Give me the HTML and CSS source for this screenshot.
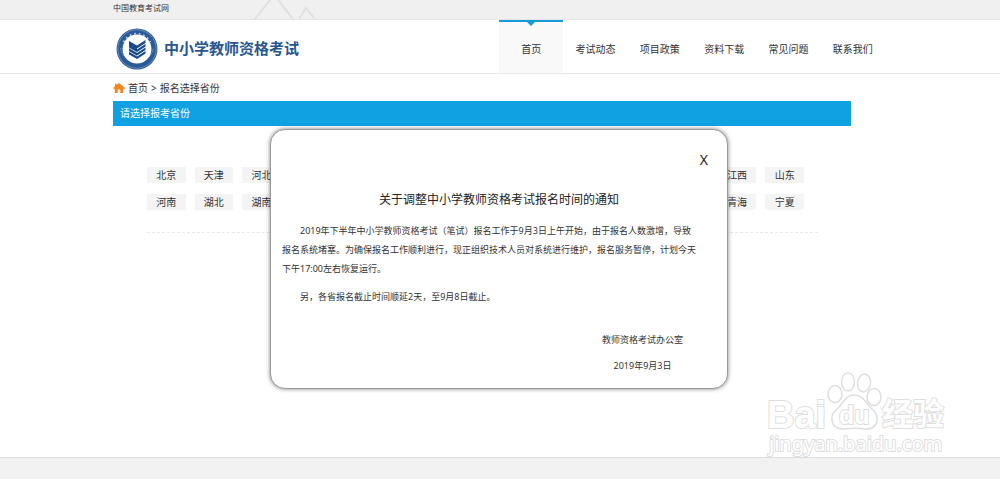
FILE: index.html
```html
<!DOCTYPE html>
<html lang="zh-CN">
<head>
<meta charset="utf-8">
<meta name="viewport" content="width=device-width, initial-scale=1">
<title>中小学教师资格考试</title>
<link rel="stylesheet" href="styles.css">
</head>
<body class="page">
<div class="topbar">
  <div class="wrap topbar-inner">
    <a class="topbar-link" href="#">中国教育考试网</a>
    <svg class="peaks" viewBox="0 0 68 19" aria-hidden="true"><path d="M2 19 17 0M25 0 40 19M46 19 53 8 62 19" fill="none" stroke="#e0e0e0" stroke-width="2"/></svg>
  </div>
</div>
<header class="header">
  <div class="wrap header-inner">
    <a class="brand" href="#">
      <svg class="brand-mark" viewBox="0 0 42 42" aria-hidden="true">
        <circle cx="21" cy="21" r="20.5" fill="#2b5a96"/>
        <circle cx="21" cy="21" r="19.2" fill="none" stroke="#8faccd" stroke-width="0.6"/>
        <path d="M7.500 14A15.500 16.500 0 0 1 34.500 14" fill="none" stroke="#c6d5e6" stroke-width="1.600" stroke-dasharray="1.600 3"/>
        <path d="M4.500 20A16.800 16.800 0 0 0 37.500 20" fill="none" stroke="#7f9fc5" stroke-width="1.200" stroke-dasharray="1 1"/>
        <circle cx="21" cy="21" r="14.400" fill="#fff"/>
        <path d="M13 13 21 17.500V31L13 26.500Z" fill="#174b8b"/>
        <path d="M21 17.500 29.500 12V15L21 20.500ZM21 21.500 29.500 16V18.500L21 24ZM21 25 29.500 19.500V22L21 27.500ZM21 28.500 29.500 23V25.500L21 31Z" fill="#174b8b"/>
        <path d="M13 20 21 24.500M13 23.500 21 28" stroke="#fff" stroke-width="0.700"/>
      </svg>
      <span class="brand-name">中小学教师资格考试</span>
    </a>
    <nav class="nav">
      <a class="nav-item nav-active" href="#">首页</a>
      <a class="nav-item" href="#">考试动态</a>
      <a class="nav-item" href="#">项目政策</a>
      <a class="nav-item" href="#">资料下载</a>
      <a class="nav-item" href="#">常见问题</a>
      <a class="nav-item" href="#">联系我们</a>
    </nav>
  </div>
</header>
<main class="wrap main">
  <div class="crumbs">
    <svg class="home" viewBox="0 0 12 10" aria-hidden="true"><path d="M6 0 12 5 11 6.200 10.200 5.600V10H7.300V6.500H4.700V10H1.800V5.600L1 6.200 0 5 2 3.300V.8H3.500V2Z" fill="#f5841f"/></svg>
    <a class="crumb" href="#">首页</a><span class="sep">&gt;</span><span>报名选择省份</span>
  </div>
  <section class="panel">
    <h1 class="panel-title">请选择报考省份</h1>
    <div class="regions">
      <div class="region-grid">
        <a class="region" href="#">北京</a>
        <a class="region" href="#">天津</a>
        <a class="region" href="#">河北</a>
        <a class="region region-east" href="#">江西</a>
        <a class="region" href="#">山东</a>
        <a class="region" href="#">河南</a>
        <a class="region" href="#">湖北</a>
        <a class="region" href="#">湖南</a>
        <a class="region region-east" href="#">青海</a>
        <a class="region" href="#">宁夏</a>
      </div>
    </div>
  </section>
</main>
<footer class="footer"></footer>

<div class="dialog" role="dialog" aria-labelledby="notice-title">
  <button class="close" type="button" aria-label="关闭">X</button>
  <h2 class="notice-title" id="notice-title">关于调整中小学教师资格考试报名时间的通知</h2>
  <p class="notice-text">2019年下半年中小学教师资格考试（笔试）报名工作于9月3日上午开始，由于报名人数激增，导致报名系统堵塞。为确保报名工作顺利进行，现正组织技术人员对系统进行维护，报名服务暂停，计划今天下午17:00左右恢复运行。</p>
  <p class="notice-text">另，各省报名截止时间顺延2天，至9月8日截止。</p>
  <div class="signature">
    <span>教师资格考试办公室</span>
    <span>2019年9月3日</span>
  </div>
</div>

<svg class="watermark" viewBox="0 0 188 90" aria-hidden="true">
  <g fill="#fff" stroke="#dedede" stroke-width="1.500">
    <ellipse cx="71" cy="22" rx="7" ry="8.500"/>
    <ellipse cx="84" cy="10" rx="6.500" ry="9"/>
    <ellipse cx="100" cy="11" rx="6.500" ry="9" transform="rotate(10 100 11)"/>
    <ellipse cx="110" cy="25" rx="7" ry="8.500"/>
    <path d="M90 23C81 23 79 32 73 37 65 43 66 56 78 57 85 57 93 55 101 57 113 58 117 46 109 38 102 32 100 23 90 23Z"/>
  </g>
  <g class="wm-text">
    <text class="wm-bai" x="3" y="56">Bai</text>
    <text class="wm-du" x="75" y="52">du</text>
    <text class="wm-cn" x="118" y="53">经验</text>
    <text class="wm-url" x="5" y="79">jingyan.baidu.com</text>
  </g>
</svg>
</body>
</html>
```
FILE: styles.css
```css
* { box-sizing: border-box; }

.page {
  margin: 0;
  min-height: 100vh;
  display: flex;
  flex-direction: column;
  background: #fff;
  color: #333;
  font: 10px/16px "Noto Sans", "Noto Sans CJK SC", sans-serif;
}

a { color: inherit; text-decoration: none; }

.wrap { width: 100%; max-width: 774px; margin: 0 auto; }

.topbar { background: #f0f0f0; border-bottom: 1px solid #e4e4e4; }
.topbar-inner { display: flex; gap: 84px; height: 19px; }
.topbar-link { font-size: 8px; }
.peaks { width: 68px; height: 19px; }

.header { border-bottom: 1px solid #e8e8e8; }
.header-inner { display: flex; justify-content: space-between; padding-right: 2px; }
.brand { display: flex; align-items: center; gap: 6px; padding: 4px 0 0 3px; }
.brand-mark { width: 42px; height: 42px; }
.brand-name { color: #28568f; font-size: 15px; line-height: 24px; font-weight: 700; padding-bottom: 2px; }

.nav { display: grid; grid-template-columns: repeat(6, 1fr); width: 50%; }
.nav-item {
  position: relative;
  padding: 19px 0 16px;
  border-top: 2px solid transparent;
  line-height: 16px;
  text-align: center;
}
.nav-active { background: #f9f9f9; border-top-color: #169bd7; }
.nav-active::before {
  content: "";
  position: absolute;
  top: 0;
  left: 50%;
  margin-left: -4px;
  border: 4px solid transparent;
  border-top-color: #169bd7;
  border-bottom: 0;
}

.main { flex: 1; padding-right: 36px; }
.crumbs { display: flex; align-items: center; padding: 6px 0 5px; }
.home { width: 12px; height: 10px; margin-right: 3px; }
.sep { margin: 0 3px; }
.panel-title {
  margin: 0;
  padding: 4px 7px 5px;
  background: #0fa1e1;
  color: #fff;
  font-size: 10px;
  line-height: 16px;
  font-weight: 400;
}
.regions {
  margin: 41px 33px 0 34px;
  padding: 0 14px 22px 0;
  border-bottom: 1px dashed #e8e8e8;
}
.region-grid { display: grid; grid-template-columns: repeat(14, 1fr); gap: 11px 9px; }
.region { background: #f4f4f4; text-align: center; line-height: 16px; }
.region-east { grid-column: 13; }

.footer { height: 22px; background: #f2f2f2; border-top: 1px solid #dcdcdc; }

.dialog {
  position: absolute;
  top: 129px;
  left: 50%;
  width: 458px;
  margin-left: -230px;
  padding: 22px 11px 14px;
  display: flex;
  flex-direction: column;
  background: #fff;
  border: 1px solid #999;
  border-radius: 15px;
  box-shadow: 0 0 4px rgba(0, 0, 0, 0.5);
}
.close {
  align-self: flex-end;
  margin-right: 8px;
  padding: 0;
  border: 0;
  background: none;
  color: #222;
  font: 14px/16px "Noto Sans", sans-serif;
}
.notice-title {
  margin: 23px 0 12px;
  color: #222;
  font-size: 12px;
  line-height: 18px;
  font-weight: 400;
  text-align: center;
}
.notice-text {
  max-width: 46em;
  margin: 0 0 9px;
  font-size: 9px;
  line-height: 19px;
  text-indent: 2em;
}
.signature {
  align-self: flex-end;
  display: grid;
  gap: 10px;
  margin: 17px 33px 0 0;
  font-size: 9px;
  text-align: center;
}

.watermark { position: absolute; right: 48px; bottom: 17px; width: 188px; height: 90px; }
.wm-text { fill: #fff; stroke: #dedede; stroke-width: 2px; paint-order: stroke; }
.wm-bai { font: 700 38px "Liberation Sans", sans-serif; }
.wm-du { font: 700 25px "Liberation Sans", sans-serif; }
.wm-cn { font: 700 31px "Noto Sans CJK SC", sans-serif; }
.wm-url { font: 20px "Noto Sans", sans-serif; }
```
